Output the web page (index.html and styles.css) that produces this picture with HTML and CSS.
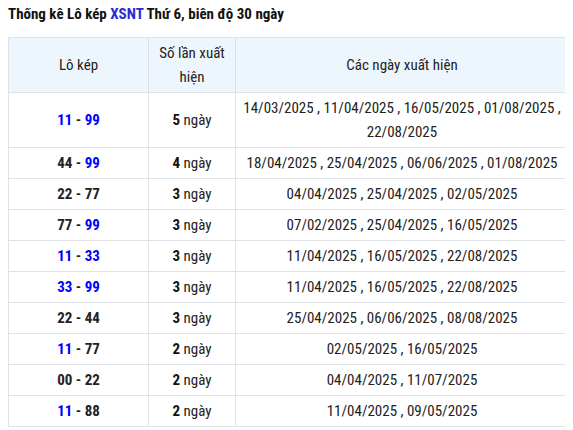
FILE: index.html
```html
<!DOCTYPE html>
<html lang="vi">
<head>
<meta charset="utf-8">
<link rel="stylesheet" href="styles.css">
</head>
<body>
<h3 class="title">Thống kê Lô kép <span class="prov">XSNT</span> Thứ 6, biên độ 30 ngày</h3>
<table class="stats">
  <colgroup><col class="c1"><col class="c2"><col class="c3"></colgroup>
  <thead>
    <tr><th>Lô kép</th><th>Số lần xuất hiện</th><th>Các ngày xuất hiện</th></tr>
  </thead>
  <tbody>
    <tr><td class="pair"><span class="hl">11</span> - <span class="hl">99</span></td><td><b>5</b> ngày</td><td class="dates">14/03/2025 , 11/04/2025 , 16/05/2025 , 01/08/2025 , 22/08/2025</td></tr>
    <tr><td class="pair">44 - <span class="hl">99</span></td><td><b>4</b> ngày</td><td class="dates">18/04/2025 , 25/04/2025 , 06/06/2025 , 01/08/2025</td></tr>
    <tr><td class="pair">22 - 77</td><td><b>3</b> ngày</td><td class="dates">04/04/2025 , 25/04/2025 , 02/05/2025</td></tr>
    <tr><td class="pair">77 - <span class="hl">99</span></td><td><b>3</b> ngày</td><td class="dates">07/02/2025 , 25/04/2025 , 16/05/2025</td></tr>
    <tr><td class="pair"><span class="hl">11</span> - <span class="hl">33</span></td><td><b>3</b> ngày</td><td class="dates">11/04/2025 , 16/05/2025 , 22/08/2025</td></tr>
    <tr><td class="pair"><span class="hl">33</span> - <span class="hl">99</span></td><td><b>3</b> ngày</td><td class="dates">11/04/2025 , 16/05/2025 , 22/08/2025</td></tr>
    <tr><td class="pair">22 - 44</td><td><b>3</b> ngày</td><td class="dates">25/04/2025 , 06/06/2025 , 08/08/2025</td></tr>
    <tr><td class="pair"><span class="hl">11</span> - 77</td><td><b>2</b> ngày</td><td class="dates">02/05/2025 , 16/05/2025</td></tr>
    <tr><td class="pair">00 - 22</td><td><b>2</b> ngày</td><td class="dates">04/04/2025 , 11/07/2025</td></tr>
    <tr><td class="pair"><span class="hl">11</span> - 88</td><td><b>2</b> ngày</td><td class="dates">11/04/2025 , 09/05/2025</td></tr>
  </tbody>
</table>
</body>
</html>
```
FILE: styles.css
```css
body {
  margin: 8px;
  font-family: Roboto, "Liberation Sans", sans-serif;
  font-stretch: condensed;
  color: #111;
  background: #fff;
}
.title {
  margin: -4px 0 13px 0;
  font-size: 15px;
  line-height: 20px;
  font-weight: 700;
  color: #111;
}
.prov { color: #2a2ad0; }
.stats {
  width: 560px;
  border-collapse: collapse;
  table-layout: fixed;
  font-size: 15px;
  line-height: 24px;
}
.c1 { width: 140px; }
.c2 { width: 87px; }
.c3 { width: 333px; }
.stats th, .stats td {
  border: 1px solid #dee2e6;
  text-align: center;
  vertical-align: middle;
  padding: 3px 4px;
}
.stats th {
  font-weight: 400;
  background: #eef6fd;
  color: #222;
  height: 48px;
  padding: 3px 10px;
}
.stats td { color: #222; }
.pair { font-weight: 700; color: #111; }
.hl { color: #0000ff; }
.stats b { color: #111; }
.dates { color: #1e40c0; padding: 3px 6px; }
```
